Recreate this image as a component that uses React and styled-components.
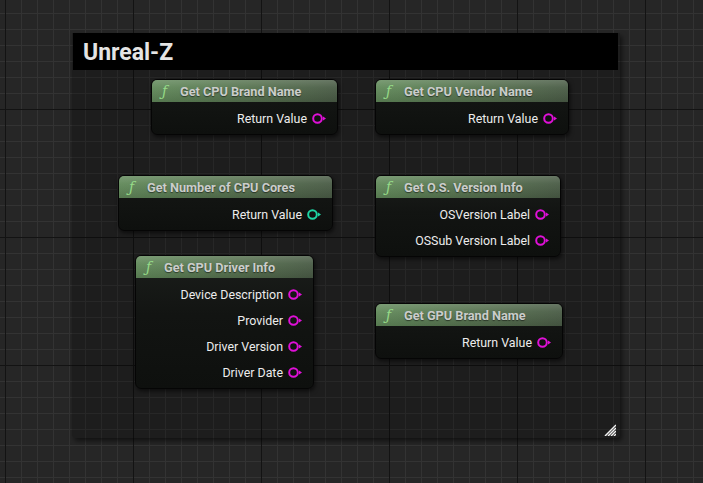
import styled, { createGlobalStyle } from "styled-components";

// 기본 페이지 스타일
const GlobalStyle = createGlobalStyle`
  html, body {
    margin: 0;
    padding: 0;
    background: #262626;
  }
  body {
    font-family: Roboto, "Liberation Sans", sans-serif;
  }
`;

// 그리드 캔버스
const Canvas = styled.div`
  position: relative;
  width: 703px;
  height: 483px;
  overflow: hidden;
  background:
    linear-gradient(to right, #131313 1px, transparent 1px) 5px 109px / 128px 128px,
    linear-gradient(to bottom, #131313 1px, transparent 1px) 5px 109px / 128px 128px,
    linear-gradient(to right, #333333 1px, transparent 1px) 5px 13px / 16px 16px,
    linear-gradient(to bottom, #333333 1px, transparent 1px) 5px 13px / 16px 16px,
    #262626;
`;

// 코멘트 박스
const Comment = styled.div`
  position: absolute;
  left: 72px;
  top: 33px;
  width: 548px;
  height: 405px;
  display: flex;
  flex-direction: column;
  background: rgba(0, 0, 0, 0.22);
  border-radius: 0 0 4px 4px;
  box-shadow: 2px 3px 5px rgba(0, 0, 0, 0.55);
`;

const CommentTitle = styled.div`
  height: 37px;
  margin-left: 1px;
  margin-right: 2px;
  background: #000;
  color: #e4e4e4;
  font-size: 23px;
  font-weight: 700;
  display: flex;
  align-items: center;
  padding-left: 10px;
  padding-top: 1px;
  box-sizing: border-box;
`;

const CommentBody = styled.div`
  flex: 1;
  display: flex;
  align-items: flex-end;
  justify-content: flex-end;
  padding: 0 4px 2px 0;
`;

// 노드
const Node = styled.div`
  position: absolute;
  left: ${({ $x }) => $x}px;
  top: ${({ $y }) => $y}px;
  width: ${({ $w }) => $w}px;
  border-radius: 6px;
  background: linear-gradient(180deg, #1b1e1b 0%, #121412 45%, #0e100e 100%);
  border: 1px solid #050505;
  box-shadow: 1px 2px 4px rgba(0, 0, 0, 0.6);
  overflow: hidden;
  padding-bottom: 3px;
  box-sizing: border-box;
`;

const Header = styled.div`
  height: 22px;
  display: flex;
  align-items: center;
  padding-left: 10px;
  gap: 9px;
  background:
    linear-gradient(180deg, rgba(255, 255, 255, 0.16) 0, rgba(255, 255, 255, 0.04) 35%, rgba(0, 0, 0, 0.12) 100%),
    linear-gradient(90deg, #628a5b 0%, #56704f 60%, #4b5d47 100%);
  margin-bottom: 3px;
`;

const FuncIcon = styled.span`
  font-family: "DejaVu Serif", "Liberation Serif", serif;
  font-style: italic;
  font-size: 14px;
  color: #95da88;
  line-height: 1;
  width: 9px;
`;

const Title = styled.span`
  font-size: 12.7px;
  font-weight: 700;
  color: #cbcdcb;
  text-shadow: 0 1px 1px rgba(0, 0, 0, 0.5);
  white-space: nowrap;
`;

const Row = styled.div`
  height: 26px;
  display: flex;
  align-items: center;
  justify-content: flex-end;
  gap: 5px;
  padding-right: 11px;
  font-size: 12.4px;
  color: #ececec;
`;

// 출력 핀
function Pin({ color }) {
  return (
    <svg width="14" height="11" viewBox="0 0 14 11">
      <circle cx="5.5" cy="5.5" r="4.3" fill="none" stroke={color} strokeWidth="2" />
      <path d="M11 3.5 L14 5.5 L11 7.5 Z" fill={color} />
    </svg>
  );
}

// 리사이즈 핸들
function Grip() {
  return (
    <svg width="13" height="13" viewBox="0 0 13 13">
      {[2, 5, 8, 11].map((k) => (
        <line key={k} x1={k} y1="13" x2="13" y2={k} stroke="#f2f2f2" strokeWidth="1.5" />
      ))}
    </svg>
  );
}

const PINK = "#e010d8";
const TEAL = "#1ed6a4";

const nodes = [
  { x: 151, y: 79, w: 187, title: "Get CPU Brand Name", pins: [["Return Value", PINK]] },
  { x: 375, y: 79, w: 194, title: "Get CPU Vendor Name", pins: [["Return Value", PINK]] },
  { x: 118, y: 175, w: 215, title: "Get Number of CPU Cores", pins: [["Return Value", TEAL]] },
  {
    x: 375,
    y: 175,
    w: 186,
    title: "Get O.S. Version Info",
    pins: [
      ["OSVersion Label", PINK],
      ["OSSub Version Label", PINK],
    ],
  },
  {
    x: 135,
    y: 255,
    w: 179,
    title: "Get GPU Driver Info",
    pins: [
      ["Device Description", PINK],
      ["Provider", PINK],
      ["Driver Version", PINK],
      ["Driver Date", PINK],
    ],
  },
  { x: 375, y: 303, w: 188, title: "Get GPU Brand Name", pins: [["Return Value", PINK]] },
];

export default function App() {
  return (
    <>
      <GlobalStyle />
      <Canvas>
        <Comment>
          <CommentTitle>Unreal-Z</CommentTitle>
          <CommentBody>
            <Grip />
          </CommentBody>
        </Comment>

        {nodes.map((n) => (
          <Node key={n.title} $x={n.x} $y={n.y} $w={n.w}>
            <Header>
              <FuncIcon>ƒ</FuncIcon>
              <Title>{n.title}</Title>
            </Header>
            {n.pins.map(([label, color]) => (
              <Row key={label}>
                <span>{label}</span>
                <Pin color={color} />
              </Row>
            ))}
          </Node>
        ))}
      </Canvas>
    </>
  );
}
